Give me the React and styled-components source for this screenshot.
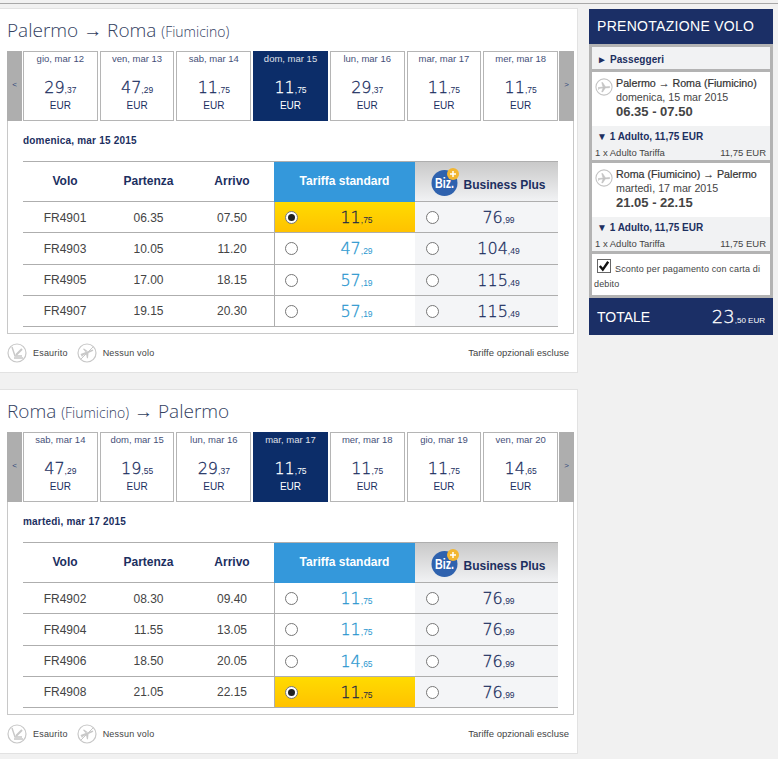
import React from "react";
import styled, { createGlobalStyle } from "styled-components";

const GlobalStyle = createGlobalStyle`
html, body {
  margin: 0;
  padding: 0;
  background: #f1f1f1;
  font-family: "Liberation Sans", Arial, sans-serif;
}
`;

const Page = styled.div`
width: 778px;
height: 759px;
overflow: hidden;
box-sizing: border-box;
border-top: 1px solid #a8a8a8;
margin-top: 3px;
padding-top: 4px;
display: flex;
align-items: flex-start;
`;

const Main = styled.div`
width: 578px;
display: flex;
flex-direction: column;
gap: 16px;
`;

const Card = styled.div`
box-sizing: border-box;
width: 578px;
height: 365px;
background: #fff;
border: 1px solid #e2e2e2;
border-left: none;
padding: 0 4px 0 7px;
`;

const Title = styled.div`
height: 42px;
box-sizing: border-box;
padding-top: 8px;
font-family: "Open Sans", sans-serif;
font-weight: 300;
font-size: 19px;
line-height: 26px;
color: #33415f;
white-space: nowrap;
`;

const Airport = styled.span`
font-size: 14px;
`;

const Box = styled.div`
box-sizing: border-box;
height: 283px;
width: 567px;
border: 1px solid #c8c8c8;
border-top: none;
`;

const Strip = styled.div`
display: flex;
margin: 0 -1px;
height: 70px;
`;

const Arrow = styled.div`
width: 15px;
flex: none;
background: #aeaeae;
color: #33477a;
font-size: 8px;
display: flex;
align-items: center;
justify-content: center;
padding-bottom: 3px;
box-sizing: border-box;
`;

const Days = styled.div`
flex: 1;
display: flex;
gap: 2px;
padding: 0 1px;
`;

const Day = styled.div`
flex: 1;
box-sizing: border-box;
border: 1px solid ${p => (p.$active ? "#0c2d69" : "#b5b5b5")};
background: ${p => (p.$active ? "#0c2d69" : "#fff")};
color: ${p => (p.$active ? "#fff" : "#1c2f5f")};
text-align: center;
`;

const DayLabel = styled.div`
font-size: 9.5px;
line-height: 11px;
margin-top: 1px;
opacity: 0.85;
`;

const DayPrice = styled.div`
font-family: "DejaVu Sans", sans-serif;
font-weight: 200;
-webkit-text-stroke: 0.3px currentColor;
font-size: 16px;
line-height: 20px;
margin-top: 14px;
`;

const Cents = styled.span`
font-size: 8.5px;
font-family: "Liberation Sans", sans-serif;
font-weight: 400;
-webkit-text-stroke: 0;
`;

const Currency = styled.div`
font-size: 10px;
line-height: 12px;
`;

const DateLine = styled.div`
font-size: 10px;
font-weight: bold;
color: #1c2f5f;
padding: 14px 0 0 15px;
line-height: 12px;
height: 26px;
letter-spacing: 0.2px;
`;

const Fares = styled.div`
margin-left: 15px;
width: 535px;
border-top: 1px solid #aeaeae;
display: grid;
grid-template-columns: 84px 83px 84px 141px 143px;
grid-template-rows: 40px repeat(4, 31.25px);
`;

const Head = styled.div`
display: flex;
align-items: center;
justify-content: center;
padding-bottom: 2px;
font-size: 12px;
font-weight: bold;
color: #1c2f5f;
border-bottom: 1px solid #aeaeae;
box-sizing: border-box;
`;

const StandardHead = styled(Head)`
background: #3498db;
color: #fff;
border-bottom-color: #3498db;
`;

const BizHead = styled(Head)`
background: linear-gradient(#c9c9c9, #f1f2f4);
gap: 4px;
padding: 0 0 0 4px;
border-bottom-color: #aeaeae;
`;

const BizName = styled.span`
padding-top: 6px;
`;

const BizLogo = styled.svg`
width: 28px;
height: 28px;
overflow: visible;
`;

const Cell = styled.div`
display: flex;
align-items: center;
justify-content: center;
padding-top: 1px;
font-size: 12px;
color: #444;
border-bottom: 1px solid #aeaeae;
box-sizing: border-box;
`;

const FareCell = styled(Cell)`
justify-content: flex-start;
padding-left: ${p => (p.$biz ? "11px" : "10px")};
border-left: ${p => (p.$biz ? "none" : "1px solid #aeaeae")};
background: ${p =>
  p.$selected ? "linear-gradient(#ffdb00, #ffc200)" : p.$biz ? "#f4f5f7" : "#fff"};
`;

const Radio = styled.span`
flex: none;
width: 13px;
height: 13px;
box-sizing: border-box;
border-radius: 50%;
border: 1px solid #777;
background: #fff;
display: flex;
align-items: center;
justify-content: center;
&::after {
  content: "";
  width: 7px;
  height: 7px;
  border-radius: 50%;
  background: ${p => (p.$on ? "#222" : "transparent")};
}
`;

const FarePrice = styled.div`
flex: 1;
text-align: center;
font-family: "DejaVu Sans", sans-serif;
font-weight: 200;
-webkit-text-stroke: 0.3px currentColor;
font-size: 16px;
color: ${p => p.$color};
`;

const Legend = styled.div`
display: flex;
align-items: center;
height: 35px;
font-size: 9px;
color: #444;
padding-top: 2px;
box-sizing: border-box;
`;

const LegendItem = styled.div`
display: flex;
align-items: center;
gap: 6px;
margin-right: 9px;
letter-spacing: 0.2px;
`;

const Optional = styled.div`
margin-left: auto;
margin-right: 4px;
font-size: 9.5px;
`;

const Icon = styled.svg`
width: ${p => p.$size || 20}px;
height: ${p => p.$size || 20}px;
flex: none;
`;

const LegIcon = styled.div`
margin-top: 2px;
`;

const Side = styled.div`
width: 184px;
margin-left: 11px;
margin-top: 1px;
`;

const SideHead = styled.div`
height: 35px;
background: #1b2f66;
color: #fff;
font-size: 14px;
line-height: 35px;
padding-left: 8px;
letter-spacing: 0.3px;
`;

const SideBody = styled.div`
background: #b3b3b3;
padding: 3px;
display: flex;
flex-direction: column;
gap: 3px;
`;

const Passengers = styled.div`
background: #f1f2f3;
height: 22px;
line-height: 25px;
padding-left: 5px;
font-size: 10px;
font-weight: bold;
color: #1c2f5f;
letter-spacing: 0.1px;
`;

const Leg = styled.div`
background: #fff;
`;

const LegTop = styled.div`
height: 54px;
box-sizing: border-box;
padding: 4px 0 0 3px;
display: flex;
gap: 3px;
`;

const LegText = styled.div`
font-size: 10.7px;
line-height: 14px;
color: #444;
white-space: nowrap;
`;

const LegRoute = styled.div`
color: #333;
-webkit-text-stroke: 0.2px #333;
`;

const LegTime = styled.div`
font-size: 13px;
font-weight: bold;
line-height: 16px;
color: #444;
`;

const LegFare = styled.div`
background: #f1f2f3;
height: 34px;
box-sizing: border-box;
padding: 5px 4px 0 3px;
`;

const LegFareTitle = styled.div`
font-size: 10px;
font-weight: bold;
color: #1c2f5f;
line-height: 12px;
padding-left: 2px;
`;

const LegFareRow = styled.div`
display: flex;
justify-content: space-between;
font-size: 9.5px;
line-height: 12px;
margin-top: 4px;
color: #444;
`;

const Discount = styled.div`
background: #fff;
height: 41px;
box-sizing: border-box;
padding: 5px 3px 0 2px;
font-size: 9px;
line-height: 15px;
color: #444;
letter-spacing: 0.15px;
`;

const DiscountBox = styled.span`
display: inline-flex;
align-items: center;
justify-content: center;
width: 14px;
height: 14px;
box-sizing: border-box;
border: 1px solid #666;
background: #fff;
margin: 0 4px 0 3px;
vertical-align: 0;
`;

const Total = styled.div`
height: 37px;
background: #1b2f66;
color: #fff;
display: flex;
align-items: center;
justify-content: space-between;
padding: 0 8px;
font-size: 14px;
`;

const TotalPrice = styled.div`
font-family: "DejaVu Sans", sans-serif;
font-weight: 200;
-webkit-text-stroke: 0.3px currentColor;
font-size: 18px;
`;

const TotalSmall = styled.span`
font-size: 8px;
font-family: "Liberation Sans", sans-serif;
font-weight: 400;
-webkit-text-stroke: 0;
`;

const PlaneIcon = ({ size }) => (
  <Icon $size={size} viewBox="0 0 20 20" fill="none">
    <circle cx="10" cy="10" r="9" stroke="#c4c4c4" strokeWidth="1.2" />
    <path d="M3.5 10.6 L16 9.4 Q17.5 10 16 10.8 L11.5 11 L8.5 15.5 H7.5 L8.8 11.2 L5.5 11.4 L4.3 12.6 H3.6 L4.2 11 Z M8.8 9.8 L7.5 5 H8.5 L11.5 9.6 Z" fill="#c4c4c4" stroke="#c4c4c4" strokeWidth="0.6" />
  </Icon>
);

const SoldOutIcon = () => (
  <Icon viewBox="0 0 20 20" fill="none">
    <circle cx="10" cy="10" r="9" stroke="#c8c8c8" strokeWidth="1.2" />
    <path d="M5 4 L8 13 H15 M7 15 H16" stroke="#c8c8c8" strokeWidth="1.4" />
    <path d="M15 6 L9 12" stroke="#c8c8c8" strokeWidth="2" />
  </Icon>
);

const NoFlightIcon = () => (
  <Icon viewBox="0 0 20 20" fill="none">
    <circle cx="10" cy="10" r="9" stroke="#c8c8c8" strokeWidth="1.2" />
    <path d="M4 16 L16 4" stroke="#c8c8c8" strokeWidth="1" />
    <path d="M3.5 11 L15.5 6.5 Q17 7 15.8 8 L11.5 10 L11 15 L10 15.5 L9 11 L6 12.5 L5 14 L4.5 13 Z M8.5 9 L6 6 L7 5.5 L10.5 8 Z" fill="#c8c8c8" />
  </Icon>
);

const Price = ({ value }) => {
  const [whole, cents] = value.split(",");
  return (
    <>
      {whole}
      <Cents>,{cents}</Cents>
    </>
  );
};

const outbound = {
  title: (
    <>
      Palermo → Roma <Airport>(Fiumicino)</Airport>
    </>
  ),
  days: [
    ["gio, mar 12", "29,37"],
    ["ven, mar 13", "47,29"],
    ["sab, mar 14", "11,75"],
    ["dom, mar 15", "11,75", true],
    ["lun, mar 16", "29,37"],
    ["mar, mar 17", "11,75"],
    ["mer, mar 18", "11,75"],
  ],
  date: "domenica, mar 15 2015",
  flights: [
    ["FR4901", "06.35", "07.50", "11,75", "76,99", true],
    ["FR4903", "10.05", "11.20", "47,29", "104,49"],
    ["FR4905", "17.00", "18.15", "57,19", "115,49"],
    ["FR4907", "19.15", "20.30", "57,19", "115,49"],
  ],
};

const inbound = {
  title: (
    <>
      Roma <Airport>(Fiumicino)</Airport> → Palermo
    </>
  ),
  days: [
    ["sab, mar 14", "47,29"],
    ["dom, mar 15", "19,55"],
    ["lun, mar 16", "29,37"],
    ["mar, mar 17", "11,75", true],
    ["mer, mar 18", "11,75"],
    ["gio, mar 19", "11,75"],
    ["ven, mar 20", "14,65"],
  ],
  date: "martedì, mar 17 2015",
  flights: [
    ["FR4902", "08.30", "09.40", "11,75", "76,99"],
    ["FR4904", "11.55", "13.05", "11,75", "76,99"],
    ["FR4906", "18.50", "20.05", "14,65", "76,99"],
    ["FR4908", "21.05", "22.15", "11,75", "76,99", true],
  ],
};

const FlightCard = ({ data }) => (
  <Card>
    <Title>{data.title}</Title>
    <Box>
      <Strip>
        <Arrow>&lt;</Arrow>
        <Days>
          {data.days.map(([label, price, active]) => (
            <Day key={label} $active={active}>
              <DayLabel>{label}</DayLabel>
              <DayPrice>
                <Price value={price} />
              </DayPrice>
              <Currency>EUR</Currency>
            </Day>
          ))}
        </Days>
        <Arrow>&gt;</Arrow>
      </Strip>
      <DateLine>{data.date}</DateLine>
      <Fares>
        <Head>Volo</Head>
        <Head>Partenza</Head>
        <Head>Arrivo</Head>
        <StandardHead>Tariffa standard</StandardHead>
        <BizHead>
          <BizLogo viewBox="0 0 28 28">
            <circle cx="13.5" cy="15" r="13" fill="#2f62ae" />
            <text x="4" y="20" fontSize="14" fontWeight="bold" textLength="19" lengthAdjust="spacingAndGlyphs" fontFamily="Liberation Sans Narrow, Liberation Sans, sans-serif" fill="#fff">Biz.</text>
            <circle cx="22" cy="6" r="6" fill="#f2b632" />
            <path d="M22 3 V9 M19 6 H25" stroke="#fff" strokeWidth="1.5" />
          </BizLogo>
          <BizName>Business Plus</BizName>
        </BizHead>
        {data.flights.map(([code, dep, arr, std, biz, selected]) => (
          <React.Fragment key={code}>
            <Cell>{code}</Cell>
            <Cell>{dep}</Cell>
            <Cell>{arr}</Cell>
            <FareCell $selected={selected}>
              <Radio $on={selected} />
              <FarePrice $color={selected ? "#1f2a44" : "#2b97cf"}>
                <Price value={std} />
              </FarePrice>
            </FareCell>
            <FareCell $biz>
              <Radio />
              <FarePrice $color="#1c2f5f">
                <Price value={biz} />
              </FarePrice>
            </FareCell>
          </React.Fragment>
        ))}
      </Fares>
    </Box>
    <Legend>
      <LegendItem>
        <SoldOutIcon />
        Esaurito
      </LegendItem>
      <LegendItem>
        <NoFlightIcon />
        Nessun volo
      </LegendItem>
      <Optional>Tariffe opzionali escluse</Optional>
    </Legend>
  </Card>
);

const SummaryLeg = ({ route, date, time }) => (
  <Leg>
    <LegTop>
      <LegIcon>
        <PlaneIcon size={18} />
      </LegIcon>
      <LegText>
        <LegRoute>{route}</LegRoute>
        <div>{date}</div>
        <LegTime>{time}</LegTime>
      </LegText>
    </LegTop>
    <LegFare>
      <LegFareTitle>▼ 1 Adulto, 11,75 EUR</LegFareTitle>
      <LegFareRow>
        <span>1 x Adulto Tariffa</span>
        <span>11,75 EUR</span>
      </LegFareRow>
    </LegFare>
  </Leg>
);

const App = () => (
  <>
    <GlobalStyle />
    <Page>
      <Main>
        <FlightCard data={outbound} />
        <FlightCard data={inbound} />
      </Main>
      <Side>
        <SideHead>PRENOTAZIONE VOLO</SideHead>
        <SideBody>
          <Passengers>► Passeggeri</Passengers>
          <SummaryLeg route="Palermo → Roma (Fiumicino)" date="domenica, 15 mar 2015" time="06.35 - 07.50" />
          <SummaryLeg route="Roma (Fiumicino) → Palermo" date="martedì, 17 mar 2015" time="21.05 - 22.15" />
          <Discount>
            <DiscountBox>
              <svg width="12" height="12" viewBox="0 0 10 10">
                <path d="M1.5 5 L4 8 L8.5 1.5" stroke="#111" strokeWidth="2" fill="none" />
              </svg>
            </DiscountBox>
            Sconto per pagamento con carta di debito
          </Discount>
        </SideBody>
        <Total>
          TOTALE
          <TotalPrice>
            23<TotalSmall>,50 EUR</TotalSmall>
          </TotalPrice>
        </Total>
      </Side>
    </Page>
  </>
);

export default App;
